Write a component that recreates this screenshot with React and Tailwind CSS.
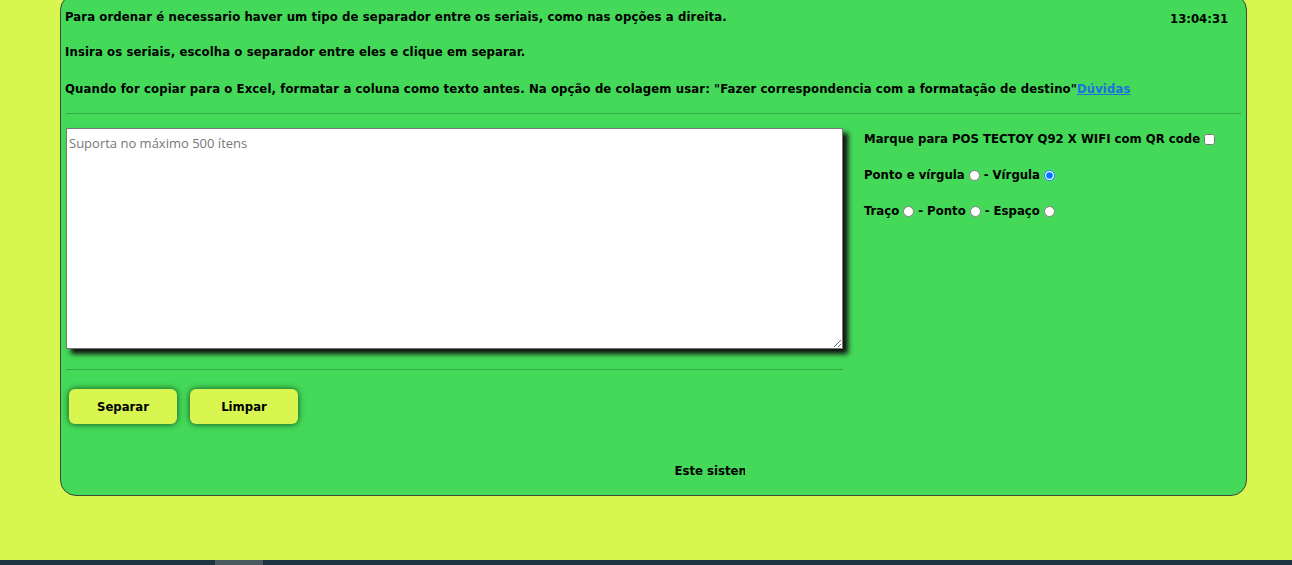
export default function App() {
  const font = { fontFamily: '"DejaVu Sans Condensed", "DejaVu Sans", sans-serif' };
  return (
    <div className="w-[1292px] h-[565px] bg-[#d8f64f] flex flex-col overflow-hidden text-black" style={font}>
      <div className="flex-1 px-[60px]">
        <div className="mt-[-6px] h-[502px] w-[1187px] bg-[#44d958] border border-[#3d4a3d] rounded-[16px] px-[4px] pt-[14px] text-[13px] font-bold flex flex-col">
          {/* instructions */}
          <div className="flex">
            <div className="flex-1 leading-[16px] tracking-[0.1px]">
              <p className="h-[35px]">Para ordenar é necessario haver um tipo de separador entre os seriais, como nas opções a direita.</p>
              <p className="h-[37px]">Insira os seriais, escolha o separador entre eles e clique em separar.</p>
              <p>
                Quando for copiar para o Excel, formatar a coluna como texto antes. Na opção de colagem usar: "Fazer correspondencia com a formatação de destino"
                <a href="#" className="text-[#1f6fe0] underline">Dúvidas</a>
              </p>
            </div>
            <div className="w-[72px] pt-[2px] leading-[16px]">13:04:31</div>
          </div>
          <div className="mt-[16px] h-px bg-[#33a845] mx-[1px]" />

          <div className="flex mt-[14px]">
            <div className="w-[777px] ml-[1px]">
              <textarea
                placeholder="Suporta no máximo 500 ítens"
                className="block w-[777px] h-[221px] bg-white border border-[#767676] shadow-[5px_5px_5px_#111] px-[2px] py-[5px] text-[13px] font-normal resize-y placeholder:text-[#777]"
                style={{ fontFamily: '"Open Sans", sans-serif' }}
              />
              <div className="mt-[20px] h-px bg-[#33a845]" />
              <div className="flex gap-[13px] mt-[19px] ml-[3px]">
                <button className="w-[108px] h-[35px] rounded-[6px] bg-[#d8f64f] shadow-[0_0_6px_#0f4a1a] font-bold text-[13px]">Separar</button>
                <button className="w-[108px] h-[35px] rounded-[6px] bg-[#d8f64f] shadow-[0_0_6px_#0f4a1a] font-bold text-[13px]">Limpar</button>
              </div>
            </div>
            <div className="ml-[21px] flex flex-col gap-[20px] pt-[3px] leading-[16px]">
              <div className="flex items-center gap-[4px]">
                Marque para POS TECTOY Q92 X WIFI com QR code
                <input type="checkbox" className="w-[11px] h-[11px] accent-white" />
              </div>
              <div className="flex items-center gap-[4px]">
                Ponto e vírgula
                <input type="radio" name="a" className="w-[11px] h-[11px] m-0" />
                - Vírgula
                <input type="radio" name="a" defaultChecked className="w-[11px] h-[11px] m-0" />
              </div>
              <div className="flex items-center gap-[4px]">
                Traço
                <input type="radio" name="b" className="w-[11px] h-[11px] m-0" />
                - Ponto
                <input type="radio" name="b" className="w-[11px] h-[11px] m-0" />
                - Espaço
                <input type="radio" name="b" className="w-[11px] h-[11px] m-0" />
              </div>
            </div>
          </div>

          <div className="mt-[37px] flex justify-center pl-[112px]">
            <div className="w-[70px] overflow-hidden whitespace-nowrap">Este sistema</div>
          </div>
        </div>
      </div>
      <div className="h-[5px] bg-[#1e3340] flex">
        <div className="ml-[215px] w-[48px] bg-[#4b5a60]" />
      </div>
    </div>
  );
}
